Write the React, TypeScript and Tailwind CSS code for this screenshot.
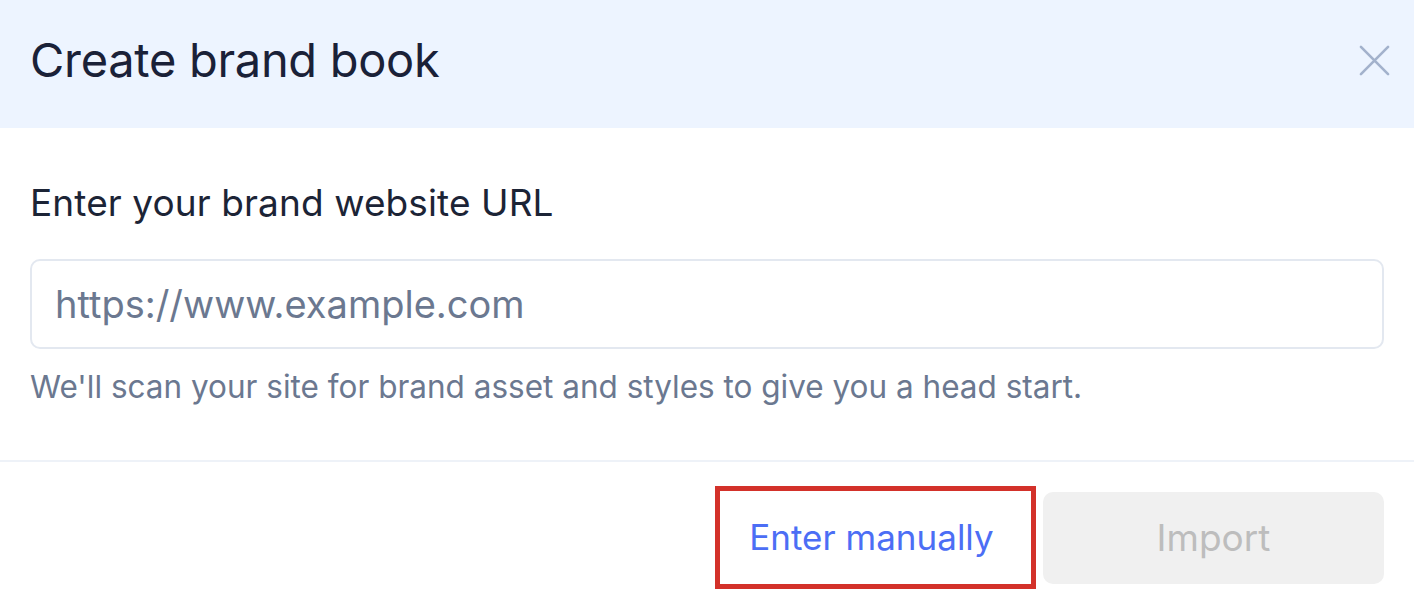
export default function App() {
    return (
        <div className="w-[1414px] h-[610px] bg-white overflow-hidden" style={{ fontFamily: 'Inter, "Noto Sans", sans-serif' }}>
            <header className="h-[128px] bg-[#EDF4FF] flex items-center justify-between pl-[30px] pr-[24px] pb-[8px]">
                <h1 className="text-[47px] leading-[56px] text-[#1A2138] font-normal tracking-[-0.3px]">Create brand book</h1>
                <button className="text-[#A3B2CC]">
                    <svg width="31" height="31" viewBox="0 0 32 32" fill="none" stroke="currentColor" strokeWidth="2.7" strokeLinecap="round">
                        <path d="M2 2L30 30M30 2L2 30" />
                    </svg>
                </button>
            </header>

            <div className="px-[30px] pt-[53px] pb-[55px]">
                <label className="block text-[37px] leading-[44px] text-[#1C2436] tracking-[0.1px]">Enter your brand website URL</label>
                <input
                    type="text"
                    placeholder="https://www.example.com"
                    className="mt-[34px] w-full h-[90px] rounded-[10px] border-2 border-[#E3E8F0] px-[23px] text-[38px] text-[#1E2639] placeholder:text-[#6B7890] outline-none"
                />
                <p className="mt-[20px] text-[31.5px] leading-[36px] text-[#6B7890]">
                    We'll scan your site for brand asset and styles to give you a head start.
                </p>
            </div>

            <div className="h-[2px] bg-[#EEF2F8]" />

            <footer className="flex justify-end items-center px-[30px] pt-[24px]">
                <div className="w-[321px] h-[103px] border-[5px] border-[#D3312A] flex items-center justify-center">
                    <button className="text-[35px] text-[#4C6EF5] pr-[8px]">Enter manually</button>
                </div>
                <button disabled className="ml-[7px] w-[341px] h-[92px] rounded-[10px] bg-[#F0F0F0] text-[37px] text-[#BDBDBD]">
                    Import
                </button>
            </footer>
        </div>
    );
}
